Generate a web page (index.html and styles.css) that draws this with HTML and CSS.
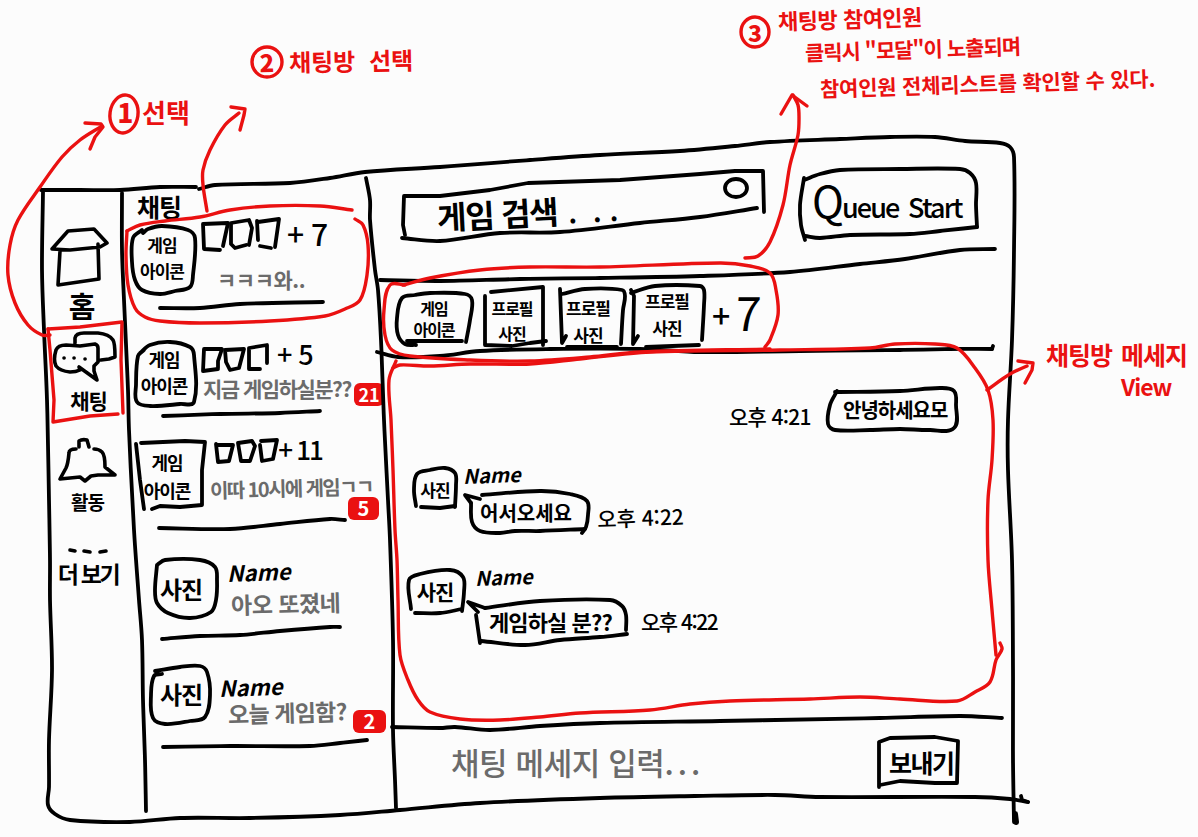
FILE: index.html
```
<!DOCTYPE html>
<html lang="ko">
<head>
<meta charset="utf-8">
<title>채팅 와이어프레임</title>
<link rel="stylesheet" href="styles.css">
</head>
<body>
<div class="board">
  <div class="app">
    <nav class="rail">
      <div class="nav-item">
        <svg class="icon icon-home" viewBox="48 226 75 62"><path d="M52 249 68 231l26-2 13 14-7 4-30 3zM60 251l-2 34 41-6-1-35"/></svg>
        <span class="label home">홈</span>
      </div>
      <div class="nav-item">
        <svg class="icon icon-chat" viewBox="48 324 75 60"><path d="M75 343V338Q76 333 84 333L98 333Q109 334 113 340Q115 343 115 357L109 359 101 360M56 350Q58 345 66 345L80 346 95 344Q98 345 98 348V362L94 366V371L97 380 79 367 80 370Q76 372 70 372Q60 371 56 366Q53 360 56 350z"/><path d="M64 358h.1M74 358h.1M85 359h.1"/></svg>
        <span class="label chat">채팅</span>
      </div>
      <div class="nav-item">
        <svg class="icon icon-bell" viewBox="48 416 75 70"><path d="M79 447V441Q82 439 87 440L89 447M76 449Q69 449 69 453Q68 464 66 468L60 479 80 477 85 481 91 476 98 475 115 475 105 467Q105 455 102 452Q99 449 94 449"/></svg>
        <span class="label bell">활동</span>
      </div>
      <div class="nav-item">
        <svg class="icon icon-more" viewBox="48 518 75 38"><path d="M70 550l5 1M84 551l6 1M100 552l6-1"/></svg>
        <span class="label more">더 보기</span>
      </div>
    </nav>

    <section class="rooms">
      <h1 class="rooms-title">채팅</h1>
      <article class="room room-a">
        <div class="thumb"><span>게임</span><span>아이콘</span></div>
        <div class="info"><div class="members-count">+ 7</div><div class="preview">ㅋㅋㅋ와..</div></div>
      </article>
      <article class="room room-b">
        <div class="thumb"><span>게임</span><span>아이콘</span></div>
        <div class="info"><div class="members-count">+ 5</div><div class="preview">지금 게임하실분??</div></div>
        <span class="badge">21</span>
      </article>
      <article class="room room-c">
        <div class="thumb"><span>게임</span><span>아이콘</span></div>
        <div class="info"><div class="members-count">+ 11</div><div class="preview">이따 10시에 게임ㄱㄱ</div></div>
        <span class="badge">5</span>
      </article>
      <article class="room room-d">
        <div class="thumb"><span>사진</span></div>
        <div class="info"><div class="name">Name</div><div class="preview">아오 또졌네</div></div>
      </article>
      <article class="room room-e">
        <div class="thumb"><span>사진</span></div>
        <div class="info"><div class="name">Name</div><div class="preview">오늘 게임함?</div></div>
        <span class="badge">2</span>
      </article>
    </section>

    <main class="main">
      <header class="top">
        <div class="search">게임 검색<span class="dots">. &nbsp;. .</span></div>
        <div class="queue"><span class="cap">Q</span>ueue Start</div>
      </header>
      <div class="party">
        <div class="member m1"><span>게임</span><span>아이콘</span></div>
        <div class="member m2"><span>프로필</span><span>사진</span></div>
        <div class="member m3"><span>프로필</span><span>사진</span></div>
        <div class="member m4"><span>프로필</span><span>사진</span></div>
        <div class="extra">+<span>7</span></div>
      </div>
      <div class="messages">
        <div class="msg mine"><time>오후 4:21</time><p>안녕하세요모</p></div>
        <div class="msg one">
          <div class="face">사진</div>
          <div class="col"><div class="name">Name</div><div class="line"><p>어서오세요</p><time>오후 4:22</time></div></div>
        </div>
        <div class="msg two">
          <div class="face">사진</div>
          <div class="col"><div class="name">Name</div><div class="line"><p>게임하실 분??</p><time>오후 4:22</time></div></div>
        </div>
      </div>
      <footer class="composer">
        <div class="field">채팅 메세지 입력<span>...</span></div>
        <div class="send">보내기</div>
      </footer>
    </main>
  </div>

  <!-- pen outlines of the window, cards and bubbles -->
  <svg class="ink" viewBox="0 0 1198 837">
    <polyline class="smooth" points="41,190 80,190 120,190 160,187 196,187"/>
    <polyline class="smooth" points="199,189 215,185 290,183 330,178 365,172 440,167 530,160 600,155 680,151 735,146 770,142 840,139 890,137 935,137 965,141 1000,143 1010,147 1014,157 1014,250 1012,340 1008,420 1008,470 1012,560 1013,670 1013,760 1014,822"/>
    <polyline points="1015,814 1016,822" stroke-width="6"/>
    <polyline points="1021,796 1022,800 1028,802"/>
    <polyline class="smooth" points="1028,802 1010,799 975,797 820,797 775,795 695,796 600,798 480,803 400,810 340,815 250,818 180,818 130,822 70,820 55,814 48,805 49,787 49,740 52,670 50,600 50,560 49,500 47,400 44,330 42,270 43,192"/>
    <polyline class="smooth" points="122,193 122,250 124,300 128,390 129,430 134,530 139,600 142,640 143,700 145,760 146,811"/>
    <polyline class="smooth" points="366,178 370,200 370,220 375,270 378,290 381,340 384,420 388,500 390,540 393,640 393,730 395,780 396,808"/>
    <polyline class="smooth" points="380,280 440,281 520,279 600,278 700,276 790,272 860,264 905,259 960,250 995,249"/>
    <polyline class="smooth" points="377,352 398,357 440,356 480,351 550,349 640,349 700,352 800,351 900,350 950,349 992,349"/>
    <polyline points="992,349 993,346"/>
    <polyline class="smooth" points="392,727 440,728 455,727 490,730 540,726 600,723 720,721 880,718 960,716 1002,718"/>
    <polyline points="405,235 403,225 404,196 440,196 490,190 528,183 620,180 700,174 735,171 763,171 764,212"/>
    <polyline class="smooth" points="402,238 440,241 500,233 560,232 640,223 700,217 757,208"/>
    <ellipse cx="736" cy="188" rx="11" ry="9"/>
    <polyline class="smooth" points="805,240 801,225 800,205 804,178"/>
    <polyline class="smooth" points="804,180 820,174 840,170 900,169 960,169 970,173 976,183 976,205 977,227"/>
    <polyline class="smooth" points="977,227 940,231 910,234 850,235 820,238 805,236"/>
    <polyline class="smooth" points="416,345 405,344 398,335 397,318 402,298 415,295 430,293 465,294 472,300 470,320 466,342"/>
    <polyline points="407,341 462,341"/>
    <polyline points="485,296 485,345 512,346 530,343 546,341"/>
    <polyline points="491,292 543,287 543,345"/>
    <polyline points="560,289 562,343 566,336"/>
    <polyline class="smooth" points="562,294 585,289 622,290 625,296 623,310 621,344"/>
    <polyline points="567,347 617,347"/>
    <polyline points="631,290 634,296 633,344 638,336"/>
    <polyline class="smooth" points="631,293 655,286 700,286 704,290 704,305 702,340"/>
    <polyline points="646,347 699,345"/>
    <polyline class="smooth" points="143,233 148,229 162,226 188,230 195,238 193,275 190,287 175,291 160,294 142,290 135,280 132,262 133,238 142,230"/>
    <polyline class="smooth" points="140,353 150,345 170,342 190,347 194,355 194,402 180,404 150,406 137,402 136,385 138,356 144,350"/>
    <polyline points="141,443 185,441 205,442 202,470 202,505 180,507 160,506 152,509"/>
    <polyline points="136,444 140,480 144,509"/>
    <polyline class="smooth" points="157,565 165,560 200,560 215,567 217,580 216,600 211,612 190,618 168,613 157,603 155,590 157,565"/>
    <polyline class="smooth" points="155,671 180,667 200,666 207,672 210,695 205,717 190,721 165,724 153,718 151,695 154,676 162,674"/>
    <polyline points="220,250 204,249 203,224 228,223 223,246"/>
    <polyline points="246,245 235,248 231,244 231,223 249,220 252,228 249,245"/>
    <polyline points="257,221 258,240"/><polyline points="258,222 279,219 275,247"/><polyline points="260,246 271,248"/>
    <polyline points="218,368 218,361 222,349 204,349 203,371 218,369"/>
    <polyline points="225,350 244,349 239,368 230,370 226,362 225,350"/>
    <polyline points="267,363 267,345 249,348 249,369 260,369"/>
    <polyline points="217,445 233,445 229,461 218,462 216,444"/>
    <polyline points="238,443 252,441 255,446 250,461 241,461 238,443"/>
    <polyline points="261,441 277,440 273,459 262,461 260,445"/>
    <polyline class="smooth" points="160,308 200,308 240,304 323,302"/>
    <polyline class="smooth" points="163,416 220,414 280,413 320,411"/>
    <polyline class="smooth" points="159,528 230,529 280,524 330,519 345,520"/>
    <polyline class="smooth" points="162,639 200,636 240,635 280,631 330,627 340,627"/>
    <polyline class="smooth" points="163,747 230,746 310,746 340,743 367,740"/>
    <polyline class="smooth" points="416,506 414,490 417,474 430,470 445,468 455,473 456,485 455,507"/>
    <polyline points="421,507 440,508 455,506"/>
    <polyline class="smooth" points="482,495 540,491 570,494 587,501 588,515 586,527 582,533"/>
    <polyline class="smooth" points="585,529 540,531 515,531 500,533 480,531 472,522 471,503"/>
    <polyline points="471,503 465,495 480,499"/>
    <polyline class="smooth" points="411,609 409,580 420,574 450,570 463,577 464,592 462,611"/>
    <polyline class="smooth" points="415,613 440,613 462,609"/>
    <polyline points="478,612 468,602 485,608"/>
    <polyline class="smooth" points="485,608 540,601 610,600 622,606 626,615 626,630"/>
    <polyline class="smooth" points="627,634 600,637 560,640 525,645 481,641"/>
    <polyline points="476,615 480,643"/>
    <polyline class="smooth" points="835,392 900,391 940,388 954,391 956,405 954,428 930,430 900,429 870,430 835,430 828,424 830,405 837,391"/>
    <polyline points="879,787 879,742 890,738 935,737 958,741 957,783 935,783 900,781 880,785"/>
  </svg>

  <!-- red review marks drawn over the window -->
  <svg class="ink notes" viewBox="0 0 1198 837">
    <polyline points="48,329 80,327 122,322 121,360 123,413"/>
    <polyline points="48,329 50,350 54,400 53,422 90,416 118,414"/>
    <polyline class="smooth" points="50,335 42,335 28,325 15,303 8,275 10,245 18,220 40,187 62,157 80,140 102,126"/>
    <polyline points="85,123 101,124 103,127 95,137 90,149"/>
    <ellipse cx="124" cy="114" rx="14" ry="19" transform="rotate(8 124 114)"/>
    <polyline class="smooth" points="207,211 203,185 203,170 210,150 225,125 239,113"/>
    <polyline points="231,107 245,109 244,115 240,130"/>
    <ellipse cx="267" cy="62" rx="15" ry="15"/>
    <polyline class="smooth" points="127,231 140,225 165,221 200,217 230,210 270,206 320,206 352,210"/>
    <polyline class="smooth" points="355,219 363,225 368,245 367,275 360,300 345,309 325,316 270,321 200,323 160,321 145,317 135,308 128,285 126,255 127,231"/>
    <ellipse cx="755" cy="32" rx="14" ry="15"/>
    <polyline class="smooth" points="745,258 758,256 770,242 783,205 790,165 798,135 799,118 798,105 793,95"/>
    <polyline points="781,114 792,95 807,106"/>
    <polyline class="smooth" points="405,285 390,285 384,310 385,335 392,350 410,356 470,360 530,361 590,357 640,352 770,349"/>
    <polyline class="smooth" points="403,285 430,278 480,270 530,267 600,267 720,263 750,266 770,273 776,290 778,315 770,340 765,347"/>
    <polyline class="smooth" points="393,368 400,365 430,366 470,364 530,364 580,359 650,352 780,350 870,348 895,344 935,344 957,348 975,368 988,390 993,420 992,460 988,500 988,560 992,610 996,655"/>
    <polyline class="smooth" points="1000,643 1002,649 996,660 990,682 975,692 957,701 900,699 860,697 810,699 730,701 690,704 650,710 580,713 540,717 500,720 460,719 430,712 418,700 408,680 400,655 398,600 397,560 395,530 393,470 391,420 389,380 396,361"/>
    <polyline class="smooth" points="987,390 1010,374 1027,366"/>
    <polyline points="1018,361 1033,363 1032,370 1025,383"/>
  </svg>

  <div class="note note-1"><b>1</b>선택</div>
  <div class="note note-2"><b>2</b>채팅방 선택</div>
  <div class="note note-3"><b>3</b><div class="lines"><span class="l1">채팅방 참여인원</span><span class="l2">클릭시 "모달"이 노출되며</span><span class="l3">참여인원 전체리스트를 확인할 수 있다.</span></div></div>
  <div class="note note-4"><span>채팅방 메세지</span><span class="view">View</span></div>
</div>
<script src="smooth.js"></script>
</body>
</html>
```
FILE: smooth.js
```
// Replaces each .smooth polyline with a curve through the same points.
document.querySelectorAll('polyline.smooth').forEach(function (line) {
  var p = line.getAttribute('points').trim().split(/\s+/).map(function (s) {
    return s.split(',').map(Number);
  });
  var d = 'M' + p[0];
  for (var i = 0; i < p.length - 1; i++) {
    var a = p[i - 1] || p[i], b = p[i], c = p[i + 1], e = p[i + 2] || c;
    var len = Math.hypot(c[0] - b[0], c[1] - b[1]);
    var t1 = Math.hypot(c[0] - a[0], c[1] - a[1]) || 1;
    var t2 = Math.hypot(e[0] - b[0], e[1] - b[1]) || 1;
    var k = len / 3;
    d += ' C' + [b[0] + (c[0] - a[0]) / t1 * k, b[1] + (c[1] - a[1]) / t1 * k,
      c[0] - (e[0] - b[0]) / t2 * k, c[1] - (e[1] - b[1]) / t2 * k, c[0], c[1]].join(' ');
  }
  var path = document.createElementNS('http://www.w3.org/2000/svg', 'path');
  path.setAttribute('d', d);
  line.replaceWith(path);
});
```
FILE: styles.css
```
* { box-sizing: border-box; }
body { margin: 0; background: #fcfcfc; }
p, h1 { margin: 0; font: inherit; }

.board {
  position: relative;
  width: 1198px;
  height: 837px;
  overflow: hidden;
  background: #fcfcfc;
  color: #000;
  font-family: "Noto Sans CJK KR", sans-serif;
  font-weight: 700;
  white-space: nowrap;
}
.app {
  display: grid;
  grid-template-columns: 75px 250px 1fr;
  padding: 137px 0 0 48px;
}

.ink {
  position: absolute;
  inset: 0;
  width: 1198px;
  height: 837px;
  fill: none;
  stroke: #000;
  stroke-width: 3.8;
  stroke-linecap: round;
  stroke-linejoin: round;
  pointer-events: none;
}
.notes { stroke: #ea1111; stroke-width: 3.4; }

/* navigation rail */
.rail { padding-top: 89px; }
.nav-item { display: flex; flex-direction: column; }
.icon {
  display: block;
  width: 75px;
  fill: none;
  stroke: #000;
  stroke-width: 3.6;
  stroke-linecap: round;
  stroke-linejoin: round;
}
.icon-home { height: 62px; }
.icon-chat { height: 60px; }
.icon-bell { height: 70px; }
.icon-more { height: 38px; }
.label { text-align: center; font-size: 21px; letter-spacing: -1px; }
.label.home { height: 36px; line-height: 34px; font-size: 29px; padding-right: 8px; }
.label.chat { height: 32px; line-height: 32px; padding-left: 6px; }
.label.bell { height: 32px; line-height: 32px; font-size: 19px; padding-left: 4px; }
.label.more { height: 36px; line-height: 34px; font-size: 23px; padding-left: 5px; letter-spacing: -2.3px; }

/* room list */
.rooms { padding-top: 49px; }
.rooms-title { height: 30px; padding-left: 14px; font-size: 25px; line-height: 40px; letter-spacing: -1px; font-weight: 700; }
.room { position: relative; display: flex; align-items: flex-start; }
.thumb { display: flex; flex-direction: column; width: 62px; text-align: center; font-size: 17px; line-height: 26px; letter-spacing: -1px; }
.members-count { font-size: 27px; letter-spacing: -.8px; height: 32px; line-height: 32px; font-weight: 500; }
.name { font-size: 22px; font-style: italic; transform: rotate(-2deg); transform-origin: left center; }
.preview { color: #6b6b6b; font-size: 20px; line-height: 30px; letter-spacing: -.5px; }

.room-a { height: 114px; padding-left: 8px; }
.room-a .thumb { margin-top: 16px; }
.room-a .info { margin: 1px 0 0 8px; }
.room-a .members-count { padding-left: 86px; font-size: 30px; }
.room-a .preview { margin-top: 15px; padding-left: 16px; font-size: 21px; }

.room-b { height: 100px; padding-left: 10px; }
.room-b .thumb { margin-top: 16px; font-size: 18px; }
.room-b .info { margin: 8px 0 0 8px; }
.room-b .members-count { padding-left: 74px; font-size: 27px; }
.room-b .preview { margin-top: 3px; font-size: 21px; letter-spacing: -1.5px; }

.room-c { height: 115px; padding-left: 15px; }
.room-c .thumb { margin-top: 18px; font-size: 18px; line-height: 28px; }
.room-c .info { margin: 3px 0 0 14px; }
.room-c .members-count { padding-left: 68px; font-size: 26px; letter-spacing: -2px; }
.room-c .preview { margin-top: 8px; font-size: 20px; letter-spacing: -1.6px; transform: rotate(-1.5deg); }

.room-d { height: 105px; padding-left: 27px; }
.room-d .thumb { margin-top: 29px; font-size: 24px; line-height: 30px; }
.room-d .info { margin: 12px 0 0 15px; }
.room-d .name { line-height: 30px; }
.room-d .preview { margin-top: 1px; padding-left: 4px; font-size: 23px; transform: rotate(-1.5deg); }

.room-e { height: 110px; padding-left: 27px; }
.room-e .thumb { margin-top: 29px; font-size: 24px; line-height: 30px; }
.room-e .info { margin: 22px 0 0 7px; }
.room-e .name { line-height: 30px; }
.room-e .preview { margin-top: -5px; padding-left: 9px; font-size: 23px; letter-spacing: -.8px; transform: rotate(-1.5deg); }

.badge {
  position: absolute;
  width: 30px;
  height: 23px;
  border-radius: 6px;
  background: #ea1111;
  color: #fff;
  text-align: center;
  font-size: 20px;
  line-height: 22px;
}
.room-b .badge { left: 231px; top: 53px; font-size: 18px; }
.room-c .badge { left: 225px; top: 67px; width: 31px; }
.room-e .badge { left: 230px; top: 60px; width: 33px; }

/* search and queue */
.top { display: flex; height: 133px; }
.search { width: 375px; margin-left: 64px; padding-top: 54px; font-size: 32px; line-height: 44px; letter-spacing: -1.3px; transform: rotate(-3deg); transform-origin: 60px 76px; }
.dots { margin-left: 11px; letter-spacing: .5px; font-size: 26px; }
.queue { padding-top: 42px; font-size: 27px; line-height: 50px; letter-spacing: -1.9px; font-weight: 500; word-spacing: 4px; }
.queue .cap { font-size: 43px; line-height: 40px; font-weight: 400; }

/* party members */
.party { display: flex; height: 80px; }
.member { display: flex; flex-direction: column; text-align: center; font-size: 16px; line-height: 20px; letter-spacing: -1px; }
.m1 { width: 74px; margin: 28px 0 0 24px; line-height: 21px; }
.m2 { width: 60px; margin: 26px 0 0 11px; line-height: 25px; }
.m3 { width: 64px; margin: 24px 0 0 14px; line-height: 27px; font-size: 17px; }
.m4 { width: 70px; margin: 17px 0 0 12px; line-height: 27px; font-size: 17px; }
.extra { display: flex; gap: 5px; margin: 16px 0 0 10px; font-size: 32px; line-height: 56px; font-weight: 500; }
.extra span { font-size: 46px; line-height: 50px; font-weight: 400; transform: skewX(-4deg); }

/* conversation */
.messages { height: 375px; padding-top: 43px; }
.msg { display: flex; }
.msg time { font-size: 21px; letter-spacing: -.7px; font-weight: 500; }
.mine { height: 69px; line-height: 34px; padding-left: 356px; }
.mine time { width: 114px; padding-top: 6px; }
.mine p { font-size: 20px; letter-spacing: -1px; }
.face { text-align: center; letter-spacing: -1px; }
.one { height: 102px; padding-left: 41px; }
.one .face { width: 42px; padding-top: 12px; font-size: 17px; line-height: 32px; }
.one .col { padding-left: 7px; }
.msg .name { line-height: 28px; font-size: 20px; }
.line { display: flex; }
.one .line { padding: 7px 0 0 17px; line-height: 32px; }
.one p { width: 117px; font-size: 20px; }
.one time { padding-top: 4px; font-size: 21px; letter-spacing: 0; transform: rotate(-2deg); }
.two { padding-left: 35px; }
.two .face { width: 54px; padding-top: 11px; font-size: 21px; line-height: 32px; }
.two .col { padding-left: 13px; }
.two .line { padding: 13px 0 0 14px; line-height: 32px; }
.two p { width: 152px; font-size: 22px; letter-spacing: -.9px; }
.two time { font-size: 21px; letter-spacing: -1.5px; }

/* message composer */
.composer { display: flex; height: 75px; line-height: 74px; }
.field { width: 438px; margin-left: 78px; color: #6b6b6b; font-size: 31px; letter-spacing: -.4px; font-weight: 500; }
.field span { letter-spacing: 4px; }
.send { font-size: 25px; letter-spacing: -1.5px; }

/* handwritten review notes, pinned on the board */
.note { position: absolute; color: #ea1111; font-size: 23px; line-height: 32px; }
.note b { display: inline-block; width: 30px; text-align: center; }
.note-1 { left: 109px; top: 96px; font-size: 26px; }
.note-1 b { width: 33px; }
.note-2 { left: 252px; top: 45px; font-size: 24px; word-spacing: 7px; transform: rotate(-1deg); }
.note-2 b { margin-right: 7px; }
.note-3 { left: 740px; top: 4px; display: flex; font-size: 21px; }
.note-3 b { font-size: 23px; line-height: 56px; }
.lines { display: flex; flex-direction: column; }
.lines span { transform: rotate(-1.8deg); transform-origin: left center; }
.l1 { margin-left: 8px; height: 32px; font-size: 22px; letter-spacing: -.5px; }
.l2 { margin-left: 35px; height: 36px; letter-spacing: -1px; }
.l3 { margin-left: 50px; height: 34px; letter-spacing: -.2px; }
.note-4 { left: 1046px; top: 337px; display: flex; flex-direction: column; font-size: 25px; line-height: 34px; letter-spacing: -1px; word-spacing: 3px; }
.note-4 .view { padding-left: 75px; line-height: 30px; font-size: 23px; letter-spacing: -1px; }
```
